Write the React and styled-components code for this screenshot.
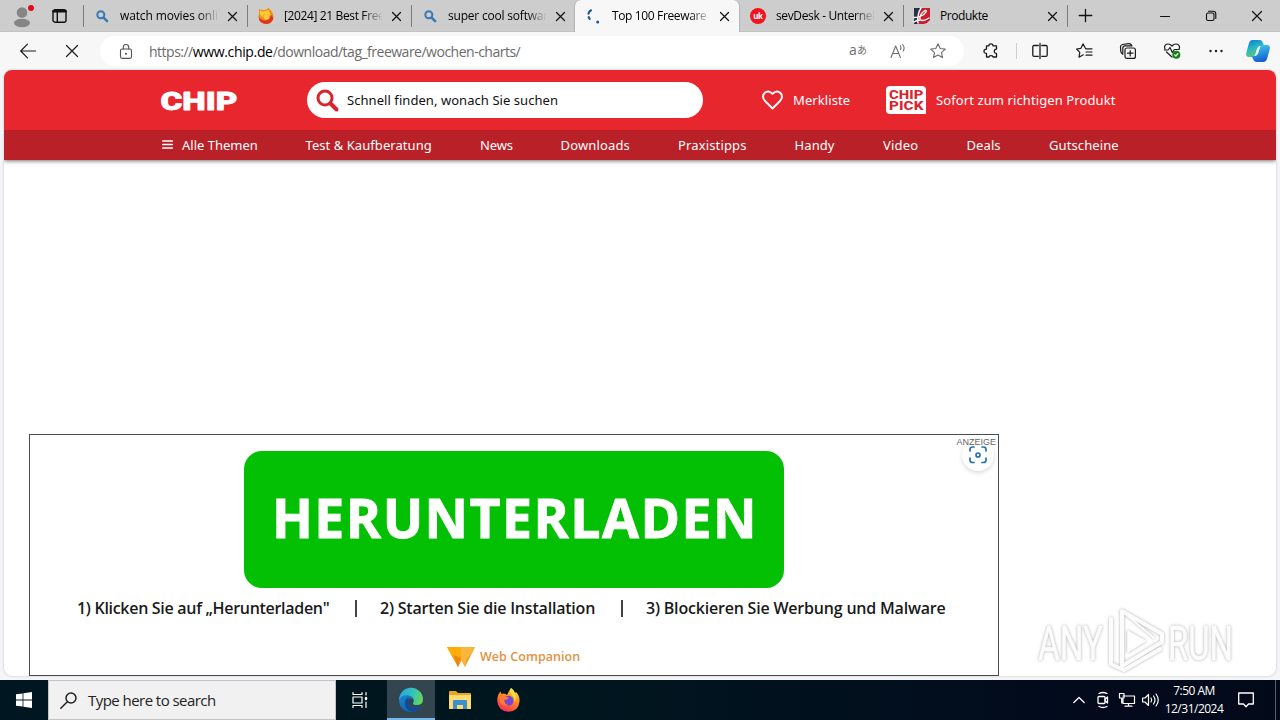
import React from "react";
import styled, { createGlobalStyle } from "styled-components";

const Global = createGlobalStyle`
  * { box-sizing: border-box; }
  body { margin: 0; background: #f5f6f8; overflow: hidden; }
`;

const ui = `"Open Sans", "Noto Sans", sans-serif`;

const Desktop = styled.div`
  width: 1280px;
  height: 720px;
  display: flex;
  flex-direction: column;
  font-family: ${ui};
  color: #111;
  position: relative;
  overflow: hidden;
`;

const Svg = styled.svg`
  display: block;
  flex: none;
  overflow: visible;
  fill: none;
  stroke: currentColor;
  stroke-width: ${(p) => p.$w || 1.1};
  stroke-linecap: round;
  stroke-linejoin: round;
`;
const Icon = ({ size = 16, h, w, children }) => (
  <Svg $w={w} width={size} height={h || size} viewBox={`0 0 ${size} ${h || size}`}>{children}</Svg>
);

/* ---------- tab strip ---------- */
const TabStrip = styled.header`
  height: 32px;
  flex: none;
  display: flex;
  background: #cdcdcd;
  border-bottom: 1px solid #c3c3c3;
`;
const TabTools = styled.div`
  width: 83px;
  display: flex;
  align-items: center;
  padding: 0 16px 0 11px;
  justify-content: space-between;
`;
const Tab = styled.div`
  width: 164px;
  height: 32px;
  display: flex;
  align-items: center;
  padding-left: ${(p) => (p.$active ? 9 : 10)}px;
  border-left: 1px solid transparent;
  border-image: ${(p) => (p.$line ? "linear-gradient(#cdcdcd 6px, #7b7b7b 6px, #7b7b7b 26px, #cdcdcd 26px) 1" : "none")};
  background: ${(p) => (p.$active ? "#f7f7f7" : "transparent")};
  border-radius: ${(p) => (p.$active ? "6px 6px 0 0" : "0")};
  box-shadow: ${(p) => (p.$active ? "1px 0 1px rgba(0, 0, 0, 0.12), -1px 0 1px rgba(0, 0, 0, 0.12)" : "none")};
`;
const TabTitle = styled.span`
  width: 98px;
  margin-left: ${(p) => (p.$active ? 11 : 10)}px;
  overflow: hidden;
  white-space: nowrap;
  font-size: 12px;
  line-height: 18px;
  letter-spacing: ${(p) => p.$ls || 0}px;
  color: #000;
  mask-image: ${(p) => (p.$short ? "none" : "linear-gradient(90deg, #000 78px, transparent 99px)")};
`;
const TabClose = styled.span`
  margin-left: 10px;
  display: flex;
`;
const NewTab = styled.div`
  width: 36px;
  display: flex;
  align-items: center;
  justify-content: center;
  border-left: 1px solid;
  border-image: linear-gradient(#cdcdcd 6px, #7b7b7b 6px, #7b7b7b 26px, #cdcdcd 26px) 1;
`;
const WindowButtons = styled.div`
  margin-left: auto;
  display: flex;
`;
const WindowButton = styled.div`
  width: 46px;
  display: flex;
  align-items: center;
  justify-content: center;
`;

const Cross = ({ size = 10 }) => (
  <Icon size={size} w={1.2}><path d={`M.5 .5L${size - 0.5} ${size - 0.5}M${size - 0.5} .5L.5 ${size - 0.5}`} /></Icon>
);
const SearchFav = () => (
  <Icon size={16} w={2}><g stroke="#3a78b5"><circle cx="6.8" cy="6.8" r="3.5" /><path d="M9.6 9.6l3.5 3.6" strokeWidth="2.5" /></g></Icon>
);
const FlameFav = () => (
  <Icon size={16}>
    <g stroke="none">
      <path d="M1 1Q4 3 9 1.2Q10 0 10.500 0Q15.500 4 15.500 9Q15 15.800 8 16Q.6 15.500 .6 8.500Q1.500 5 1 1Z" fill="#f28b1e" />
      <path d="M.6 8.500Q3 12.500 7.500 12.500Q12.500 12 12.800 7Q16.500 9 14.500 12.500Q12 16 8 16Q1 15.500 .6 8.500Z" fill="#e03420" />
      <path d="M2 2.500Q6 4.500 10 2Q13 5 12 8Q9.500 5 6.500 6Q4.500 7 4.500 9.500Q1.500 7 2 2.500Z" fill="#fbd02c" />
      <circle cx="8.300" cy="8.800" r="2.700" fill="#fbc94a" />
    </g>
  </Icon>
);
const LoadingFav = () => (
  <Icon size={16} w={2.2}>
    <path d="M6 2.300Q3.900 3.600 3.500 5.600" stroke="#1d5c92" /><path d="M3.700 9.200l1 1.600" stroke="#1d5c92" />
    <circle cx="12.700" cy="14" r="1.500" fill="#1d5c92" stroke="none" />
  </Icon>
);
const UkFav = () => (
  <Icon size={16}>
    <circle cx="8" cy="8" r="8" fill="#f3121d" stroke="none" />
    <text x="3.3" y="10.6" fontSize="8" fontWeight="700" fontFamily="Open Sans, sans-serif" fill="#fff" stroke="none" textLength="9.6">uk</text>
  </Icon>
);
const ProdFav = () => (
  <Icon size={16}>
    <g stroke="none">
      <path d="M0 0H16V12Q14 15 10 16H0Z" fill="#c9202d" />
      <path d="M0 0H7Q3 6 4 16H0Z" fill="#263148" />
    </g>
    <path d="M7 0Q3 6 4 15M0 9.500Q9 9 12 4Q13 2 11 2.500Q5.500 6 6 11Q8 14.500 15 10M0 14Q3 12 6 12" stroke="#fff" strokeWidth="1.400" />
  </Icon>
);

const tabs = [
  { title: "watch movies onlin", icon: <SearchFav />, ls: -0.13, line: true },
  { title: "[2024] 21 Best Free", icon: <FlameFav />, ls: -0.37, line: true },
  { title: "super cool softwar", icon: <SearchFav />, ls: -0.2, line: true },
  { title: "Top 100 Freeware D", icon: <LoadingFav />, ls: -0.36, active: true },
  { title: "sevDesk - Unterneh", icon: <UkFav />, ls: -0.36 },
  { title: "Produkte", icon: <ProdFav />, ls: -0.45, line: true, short: true },
];

/* ---------- toolbar ---------- */
const Toolbar = styled.div`
  height: 38px;
  flex: none;
  display: flex;
  align-items: center;
  background: #f7f7f7;
  padding-left: 6px;
`;
const Slot = styled.div`
  width: ${(p) => p.$width || 44}px;
  flex: none;
  display: flex;
  align-items: center;
  justify-content: center;
  color: ${(p) => p.$color || "#1b1b1b"};
`;
const AddressBar = styled.div`
  width: 864px;
  height: 30px;
  margin: 0 5px 0 6px;
  border-radius: 15px;
  background: #fff;
  display: flex;
  align-items: center;
  padding: 0 6px;
`;
const Url = styled.div`
  flex: 1;
  margin-left: 3px;
  font-size: 14px;
  letter-spacing: -0.5px;
  color: #6b6b6b;
  white-space: nowrap;
  b { font-weight: 400; color: #000; letter-spacing: -0.35px; }
`;
const Separator = styled.div`
  width: 1px;
  height: 16px;
  margin: 0 1px 0 3px;
  background: #cfcfcf;
`;
const Translate = styled.span`
  font: 14px ${ui};
  display: flex;
  align-items: center;
  height: 16px;
  line-height: 14px;
  padding-bottom: 3px;
  small { font: 10px/14px "Noto Sans CJK JP", sans-serif; margin-top: 1px; }
`;

/* ---------- web page ---------- */
const Frame = styled.main`
  height: 610px;
  flex: none;
  padding: 0 4px 4px;
  background: #f4f5f8;
`;
const Page = styled.div`
  height: 606px;
  border-radius: 8px;
  overflow: hidden;
  background: #fff;
  box-shadow: 0 0 2px #b5b5b5;
`;
const SiteHeader = styled.div`
  position: relative;
  z-index: 1;
  height: 60px;
  display: flex;
  align-items: center;
  padding-left: 157px;
  background: #e8262e;
  color: #fff;
  font: 14px "Noto Sans", sans-serif;
`;
const SearchField = styled.div`
  width: 396px;
  height: 36px;
  margin: 0 59px 0 70px;
  border-radius: 18px;
  background: #fff;
  color: #111;
  display: flex;
  align-items: center;
  gap: 8px;
  padding-left: 9px;
  font-size: 13px;
  letter-spacing: 0.06px;
  white-space: nowrap;
`;
const HeaderLink = styled.a`
  width: ${(p) => p.$width}px;
  display: flex;
  align-items: center;
  gap: ${(p) => p.$gap}px;
  font-size: 13px;
  letter-spacing: 0.1px;
  white-space: nowrap;
`;
const SiteNav = styled.nav`
  height: 30px;
  padding: 0 157px 0 158px;
  display: flex;
  align-items: center;
  justify-content: space-between;
  background: #b92027;
  color: #fff;
  font: 13px "Noto Sans", sans-serif;
  box-shadow: 0 1px 4px rgba(0, 0, 0, 0.55);
`;
const NavItem = styled.a`
  width: ${(p) => p.$width}px;
  display: flex;
  align-items: center;
  gap: 9px;
  white-space: nowrap;
  letter-spacing: ${(p) => p.$ls || 0}px;
`;
const nav = [
  ["Test & Kaufberatung", 127, 0.06],
  ["News", 33, -0.1],
  ["Downloads", 70, 0.15],
  ["Praxistipps", 69, 0.15],
  ["Handy", 41, 0.1],
  ["Video", 36, 0.2],
  ["Deals", 35, 0.1],
  ["Gutscheine", 70, 0.1],
];

const Advert = styled.section`
  position: relative;
  width: 970px;
  height: 242px;
  margin: 274px 0 0 25px;
  border: 1px solid #4c4c4c;
  display: flex;
  flex-direction: column;
  align-items: center;
  padding-top: 16px;
`;
const DownloadButton = styled.div`
  width: 540px;
  height: 137px;
  border-radius: 18px;
  background: #04c004;
  color: #fff;
  display: flex;
  align-items: center;
  justify-content: center;
  font: 700 53.5px/1 ${ui};
  letter-spacing: 1.5px;
  padding: 0 0 3px 2px;
  -webkit-text-stroke: 0.9px #fff;
`;
const Steps = styled.div`
  width: 874px;
  margin-top: 8px;
  display: flex;
  justify-content: space-between;
  font: 600 16px/24px ${ui};
  color: #1a1a1a;
  white-space: nowrap;
`;
const Step = styled.span`
  width: ${(p) => p.$width}px;
  letter-spacing: ${(p) => p.$ls || 0}px;
`;
const Bar = styled.i`
  width: 2px;
  height: 17px;
  margin-top: 4px;
  background: #444;
`;
const Brand = styled.div`
  width: 134px;
  margin-top: 27px;
  display: flex;
  align-items: center;
  gap: 5px;
  color: #e39242;
  font: 600 12.5px/20px "Open Sans", sans-serif;
  white-space: nowrap;
  letter-spacing: 0.05px;
`;
const AdLabel = styled.span`
  position: absolute;
  right: 2px;
  top: 2px;
  font: 9px/11px "Liberation Sans", sans-serif;
  color: #666;
  z-index: 1;
`;
const LensButton = styled.div`
  position: absolute;
  right: 4px;
  top: 4px;
  width: 32px;
  height: 32px;
  border-radius: 50%;
  background: #fff;
  box-shadow: 0 2px 4px rgba(0, 0, 0, 0.14);
  color: #2470b0;
  display: flex;
  align-items: center;
  justify-content: center;
`;
const Watermark = styled.div`
  position: absolute;
  left: 1036px;
  top: 606px;
  filter: drop-shadow(0 0 1.5px rgba(0, 0, 0, 0.32));
`;

/* ---------- taskbar ---------- */
const Taskbar = styled.footer`
  height: 40px;
  flex: none;
  display: flex;
  background: linear-gradient(90deg, #001620, #00161f 45%, #020a1c 85%, #020a1a);
  color: #fff;
`;
const TaskButton = styled.div`
  width: ${(p) => p.$width || 48}px;
  display: flex;
  align-items: center;
  justify-content: center;
  padding-right: ${(p) => p.$shift || 0}px;
  background: ${(p) => (p.$active ? "#33464f" : "transparent")};
  box-shadow: ${(p) => (p.$active ? "inset 0 -2px #76b9ed" : "none")};
`;
const TaskSearch = styled.div`
  width: 288px;
  border: 1px solid #c4c4c4;
  background: #f1f1f1;
  color: #222;
  display: flex;
  align-items: center;
  gap: 11px;
  padding-left: 11px;
  font-size: 15px;
  letter-spacing: -0.55px;
`;
const Tray = styled.div`
  margin-left: auto;
  display: flex;
`;
const Clock = styled.div`
  width: 62px;
  margin: 0 -1px 0 1px;
  display: flex;
  flex-direction: column;
  align-items: center;
  padding-top: 2px;
  font-size: 12px;
  line-height: 18px;
  letter-spacing: -0.5px;
  white-space: nowrap;
`;
const ShowDesktop = styled.div`
  width: 5px;
  margin-left: 7px;
  border-left: 1px solid #5b6070;
`;

const star = "M8 .8l2.2 4.7 5.1.6-3.8 3.5 1 5L8 12.1l-4.5 2.5 1-5L.7 6.1l5.1-.6z";

export default function App() {
  return (
    <Desktop>
      <Global />
      <TabStrip>
        <TabTools>
          <Icon size={22} h={24}>
            <g stroke="none">
              <circle cx="11" cy="8.500" r="5.300" fill="#858585" />
              <ellipse cx="11" cy="19" rx="8" ry="4.200" fill="#858585" />
              <circle cx="20" cy="4" r="3" fill="#e00b1c" />
            </g>
          </Icon>
          <Icon size={15} h={14} w={1.4}>
            <rect x="1" y=".8" width="13" height="12.400" rx="2" /><path d="M1.500 2.200H13.500" strokeWidth="2.600" /><path d="M5.300 3V13" />
          </Icon>
        </TabTools>
        {tabs.map((t) => (
          <Tab key={t.title} $active={t.active} $line={t.line}>
            {t.icon}
            <TabTitle $ls={t.ls} $short={t.short} $active={t.active}>{t.title}</TabTitle>
            <TabClose><Cross size={9} /></TabClose>
          </Tab>
        ))}
        <NewTab><Icon size={13} w={1.3}><path d="M6.500 .3V12.700M.3 6.500H12.700" /></Icon></NewTab>
        <WindowButtons>
          <WindowButton><Icon size={10}><path d="M.5 5.500H9.500" /></Icon></WindowButton>
          <WindowButton><Icon size={10}><rect x=".5" y="2" width="7.500" height="7.500" rx="1.500" /><path d="M2.500 .3H7Q9.800 .3 9.800 3V7.500" /></Icon></WindowButton>
          <WindowButton><Cross size={10} /></WindowButton>
        </WindowButtons>
      </TabStrip>

      <Toolbar>
        <Slot><Icon size={16} w={1.2}><path d="M15.500 8H.7M7.500 1.200L.7 8l6.800 6.800" /></Icon></Slot>
        <Slot><Cross size={12} /></Slot>
        <AddressBar>
          <Slot $width={40} $color="#555">
            <Icon size={12} h={15}><rect x=".5" y="5" width="11" height="9.400" rx="1.600" /><path d="M3.300 5V3.300Q3.300 .5 6 .5T8.700 3.300V5" /><circle cx="6" cy="9.700" r=".5" fill="currentColor" /></Icon>
          </Slot>
          <Url>https://<b>www.chip.de</b>/download/tag_freeware/wochen-charts/</Url>
          <Slot $width={40} $color="#707070"><Translate>a<small>あ</small></Translate></Slot>
          <Slot $width={40} $color="#707070">
            <Icon size={16}><path d="M1 14.500L5.700 3L10.400 14.500M2.700 10.500H8.700M10.300 2.700Q11.600 4.500 10.500 6.600M12.600 1.500Q15.300 4.500 13.200 8" /></Icon>
          </Slot>
          <Slot $width={40} $color="#707070"><Icon size={16}><path d={star} /></Icon></Slot>
        </AddressBar>
        <Slot>
          <Icon size={16} w={1.3}>
            <path d="M3.500 2.800H6Q6 .8 8 .8T10 2.800H13.500V6.200Q11.300 6.200 11.300 8.300T13.500 10.400V14H10Q10 12.600 8 12.600T6 14H3.500V10.400Q1 10.400 1 8.300T3.500 6.200Z" />
          </Icon>
        </Slot>
        <Separator />
        <Slot><Icon size={16} w={1.3}><path d="M6.300 2.500H2Q.8 2.500 .8 4V12Q.8 13.300 2 13.300H6.300M9.700 2.500H14Q15.200 2.500 15.200 4V12Q15.200 13.300 14 13.300H9.700M8 .5V15.500" /></Icon></Slot>
        <Slot><Icon size={17} h={16} w={1.2}><path d="M9.500 5.500L7 .9L4.900 5.300L.6 6L3.800 9.300L3 14.200L7.300 11.800M10 5.800H16M10 9H16M10 12.200H16" /></Icon></Slot>
        <Slot><Icon size={16} w={1.2}><rect x="5" y="5" width="10.400" height="10.400" rx="2" /><path d="M10.200 7.500V13M7.500 10.200H13M2.800 11.300Q.8 10 .7 8L.5 4Q.5 1.800 2.500 1.500L8.500 .6Q11 .4 11.700 2.500M2.800 10V5Q3 2.800 5 2.800H12" /></Icon></Slot>
        <Slot>
          <Icon size={17} h={16} w={1.2}>
            <path d="M8 14L2.500 9M1 6Q-.3 2.700 2.500 1.300Q5.500 .2 8 3Q10.500 .2 13.500 1.300Q16.300 2.700 15.200 6M.5 7H4L6 4.500L8.300 9.500L10.300 6.500H15" />
            <circle cx="12.300" cy="11.800" r="4" fill="#14801b" stroke="none" /><path d="M10.700 11.800l1.200 1.200 2-2.300" stroke="#fff" />
          </Icon>
        </Slot>
        <Slot><Icon size={14} h={4}><g fill="currentColor" stroke="none"><circle cx="1.500" cy="2" r="1.200" /><circle cx="7" cy="2" r="1.200" /><circle cx="12.500" cy="2" r="1.200" /></g></Icon></Slot>
        <Slot $width={40}>
          <Svg width="24" height="22" viewBox="0 0 24 22">
            <defs>
              <linearGradient id="cpA" x2=".4" y2="1"><stop stopColor="#176fd4" /><stop offset=".5" stopColor="#24b5ca" /><stop offset="1" stopColor="#5cc87c" /></linearGradient>
              <linearGradient id="cpB" x2=".3" y2="1"><stop stopColor="#43d6e8" /><stop offset="1" stopColor="#1761d3" /></linearGradient>
            </defs>
            <g stroke="none">
              <path d="M6 0H14Q16 0 17 3L18 6H14Q12 6 11 9L9 15Q8 17 5 17H3Q-1 17 .5 12L3 3Q4 0 6 0Z" fill="url(#cpA)" />
              <path d="M18 22H10Q8 22 7 19L6 16H9Q11 16 12 13L14 7Q15 5 18 5H21Q25 5 23.500 10L21 19Q20 22 18 22Z" fill="url(#cpB)" />
              <path d="M11.300 8.500Q12 6.500 14 6.500Q12.500 12 12 13.500Q11 15.500 9.300 15.500Z" fill="#eaf9ff" />
            </g>
          </Svg>
        </Slot>
      </Toolbar>

      <Frame>
        <Page>
          <SiteHeader>
            <Svg width="76" height="20" viewBox="0 0 76 20">
              <text x="-.5" y="19.500" fontFamily="Roboto, sans-serif" fontWeight="900" fontSize="26.500" fill="#fff" stroke="#fff" strokeWidth=".8" textLength="77" lengthAdjust="spacingAndGlyphs">CHIP</text>
            </Svg>
            <SearchField>
              <Icon size={23} w={3}><g stroke="#d9242d"><circle cx="9" cy="9" r="7" /><path d="M14.500 14.500l6 6" strokeWidth="4" /></g></Icon>
              Schnell finden, wonach Sie suchen
            </SearchField>
            <HeaderLink $width={124} $gap={9}>
              <Icon size={22} h={20} w={1.9}><path d="M10.500 18.500L3 11Q-.7 6.500 2.500 3Q6.500 -.5 10.500 3.800Q14.500 -.5 18.500 3Q21.700 6.500 18 11Z" /></Icon>
              Merkliste
            </HeaderLink>
            <HeaderLink $width={240} $gap={10}>
              <Svg width="40" height="28" viewBox="0 0 40 28">
                <path d="M4 0H36Q40 0 40 4V28H4Q0 28 0 24V4Q0 0 4 0Z" fill="#fff" stroke="none" />
                <g fontFamily="Roboto, sans-serif" fontWeight="800" fontSize="13.500" fill="#d9242d" stroke="none">
                  <text x="3" y="12.800" textLength="34.500" lengthAdjust="spacingAndGlyphs">CHIP</text>
                  <text x="3" y="24.300" textLength="34.500" lengthAdjust="spacingAndGlyphs">PICK</text>
                </g>
              </Svg>
              Sofort zum richtigen Produkt
            </HeaderLink>
          </SiteHeader>
          <SiteNav>
            <NavItem $width={96}>
              <Icon size={11} w={1.7}><path d="M.8 1H10.200M.8 4.500H10.200M.8 8H10.200" /></Icon>
              Alle Themen
            </NavItem>
            {nav.map(([label, width, ls]) => <NavItem key={label} $width={width} $ls={ls}>{label}</NavItem>)}
          </SiteNav>

          <Advert>
            <AdLabel>ANZEIGE</AdLabel>
            <LensButton>
              <Icon size={18} w={1.7}><path d="M1 5V3.500Q1 1 3.500 1H5M13 1H14.500Q17 1 17 3.500V5M17 12V14Q17 16.500 14.500 16.500H13M5 16.500H3.500Q1 16.500 1 14V12" /><circle cx="9" cy="9" r="2" /></Icon>
            </LensButton>
            <DownloadButton>HERUNTERLADEN</DownloadButton>
            <Steps>
              <Step $width={254} $ls={-0.3}>1) Klicken Sie auf „Herunterladen"</Step>
              <Bar />
              <Step $width={217} $ls={-0.2}>2) Starten Sie die Installation</Step>
              <Bar />
              <Step $width={305} $ls={-0.2}>3) Blockieren Sie Werbung und Malware</Step>
            </Steps>
            <Brand>
              <Svg width="28" height="20" viewBox="0 0 28 20">
                <g stroke="none">
                  <path d="M0 0H28L18 20L14 12L11 20Z" fill="#f59a1c" /><path d="M0 0H14L16 11L11 20Z" fill="#ffac08" /><path d="M14 0H28L24 8Q19 9 18 20L14 12Z" fill="#f8b63d" /><path d="M6 8L14 11L11 20Z" fill="#ee8514" />
                </g>
              </Svg>
              Web Companion
            </Brand>
          </Advert>
        </Page>
      </Frame>

      <Watermark>
        <Svg width="200" height="68" viewBox="0 0 200 68">
          <g fontFamily="Roboto, sans-serif" fontSize="49" fill="#fcfcfc" stroke="#fcfcfc" strokeWidth=".5">
            <text x="2" y="54" textLength="65" lengthAdjust="spacingAndGlyphs">ANY</text>
            <text x="132" y="54" textLength="65" lengthAdjust="spacingAndGlyphs">RUN</text>
          </g>
          <g stroke="#fcfcfc" strokeWidth="4">
            <path d="M86 5L126 28V36L86 60Z" /><path d="M92 25L110 35L92 46Z" fill="#fff" strokeWidth="1" /><path d="M75 13V58L88 64L124 43" /><path d="M86 5L118 32" strokeWidth="2" />
          </g>
        </Svg>
      </Watermark>

      <Taskbar>
        <TaskButton>
          <Icon size={16}><g fill="#fff" stroke="none"><path d="M0 2.300L6.600 1.400V7.600H0ZM7.400 1.300L16 0V7.600H7.400ZM0 8.400H6.600V14.600L0 13.700ZM7.400 8.400H16V16L7.400 14.700Z" /></g></Icon>
        </TaskButton>
        <TaskSearch>
          <Icon size={17} w={1.5}><circle cx="11" cy="6" r="5" /><path d="M7.300 9.700L.8 16.200" /></Icon>
          Type here to search
        </TaskSearch>
        <TaskButton $width={51} $shift={4}>
          <Icon size={16} w={1.2}><path d="M1 .5V2.500H10V.5M1 15.500V13.500H10V15.500" /><rect x="1" y="5" width="9" height="6" /><path d="M14 .5V3M14 10V15.500" /><path d="M14 6V7" strokeWidth="2.500" /></Icon>
        </TaskButton>
        <TaskButton $active>
          <Svg width="24" height="24" viewBox="0 0 24 24">
            <defs>
              <linearGradient id="edA" y1=".3" y2=".5"><stop stopColor="#2aa5e0" /><stop offset=".6" stopColor="#36c6b6" /><stop offset="1" stopColor="#68d456" /></linearGradient>
              <linearGradient id="edB" y2="1"><stop stopColor="#1b86cf" /><stop offset="1" stopColor="#0d55ae" /></linearGradient>
            </defs>
            <g stroke="none">
              <path d="M0 12A12 12 0 0 1 24 11.500Q24 17 17.500 17Q13.500 17 14 15.200Q16 12 13 9.500Q7 5 0 12Z" fill="url(#edA)" />
              <path d="M0 12Q2 7 8 7.200Q13 7.500 14.500 11Q10 9 9 13.500Q9 20 17 19.800Q20 19.700 22.200 18.500Q18 24 12 24A12 12 0 0 1 0 12Z" fill="url(#edB)" />
              <path d="M6 15Q6 10 10.500 9.500Q8.500 12 9 14.500Q10 20 17 19.800Q20 19.700 22.200 18.500Q18 24 13 23.800Q6 22 6 15Z" fill="#114a94" />
            </g>
          </Svg>
        </TaskButton>
        <TaskButton $width={50}>
          <Svg width="22" height="19" viewBox="0 0 22 19">
            <g stroke="none"><path d="M0 1Q0 0 1 0H7L9 2H21Q22 2 22 3V18H0Z" fill="#e9a51d" /><path d="M0 4H22V18H0Z" fill="#fddb71" /><path d="M4 18V10Q4 9 5 9H17Q18 9 18 10V18H14V14H8V18Z" fill="#3b91d0" /></g>
          </Svg>
        </TaskButton>
        <TaskButton $shift={2}>
          <Svg width="23" height="24" viewBox="0 0 23 24">
            <defs><linearGradient id="ffA" x1=".8" x2=".3" y2="1"><stop stopColor="#ffe13c" /><stop offset=".45" stopColor="#ff8b20" /><stop offset="1" stopColor="#f52c5b" /></linearGradient></defs>
            <g stroke="none">
              <path d="M14 0Q17 2 18 5L19 4Q23 8 22.500 13.500Q21.500 23.500 11.500 23.800Q1 23 .3 13Q0 7 3.500 3.500L4.500 6L7 5.500Q9 6 10 7Q12 3 14 0Z" fill="url(#ffA)" />
              <circle cx="11.500" cy="12.800" r="5" fill="#7746d9" />
              <path d="M3 7Q8 7 12 10Q10 12 7.500 12Q7 16 11 17Q5 19 3 13Z" fill="#ff7b2e" />
              <path d="M14 0Q12 4 15 7Q18 10 17 14Q21 10 18 5Q17 2 14 0Z" fill="#ffdf3f" />
            </g>
          </Svg>
        </TaskButton>
        <Tray>
          <TaskButton $width={24}><Icon size={12} h={8} w={1.3}><path d="M.8 6.500L6 1.500L11.200 6.500" /></Icon></TaskButton>
          <TaskButton $width={24}><Icon size={12} h={16} w={1.3}><rect x="1" y="4.500" width="7" height="7" rx="1" /><path d="M8 7.300L10.500 5V11L8 8.700M2 1.500Q6 -.5 10 1.500M2 14.500Q6 16.500 10 14.500" /></Icon></TaskButton>
          <TaskButton $width={24}><Icon size={16} h={14} w={1.2}><path d="M4 3H15.500V10.500H4V6M9.500 10.500V13M6 13.200H13M.5 .5H5V5H.5ZM2.700 5V10" /></Icon></TaskButton>
          <TaskButton $width={23}><Icon size={17} h={14} w={1.2}><path d="M.6 5H3L6.500 1.500V12.500L3 9H.6ZM9 5Q10.500 7 9 9M11.500 3Q14.500 7 11.500 11M14 1Q18.500 7 14 13" /></Icon></TaskButton>
          <Clock><span>7:50 AM</span><span>12/31/2024</span></Clock>
          <TaskButton $width={44}><Icon size={16} w={1.3}><path d="M.7 1H15.300V12H10.500L8 14.700L5.500 12H.7Z" /></Icon></TaskButton>
          <ShowDesktop />
        </Tray>
      </Taskbar>
    </Desktop>
  );
}
